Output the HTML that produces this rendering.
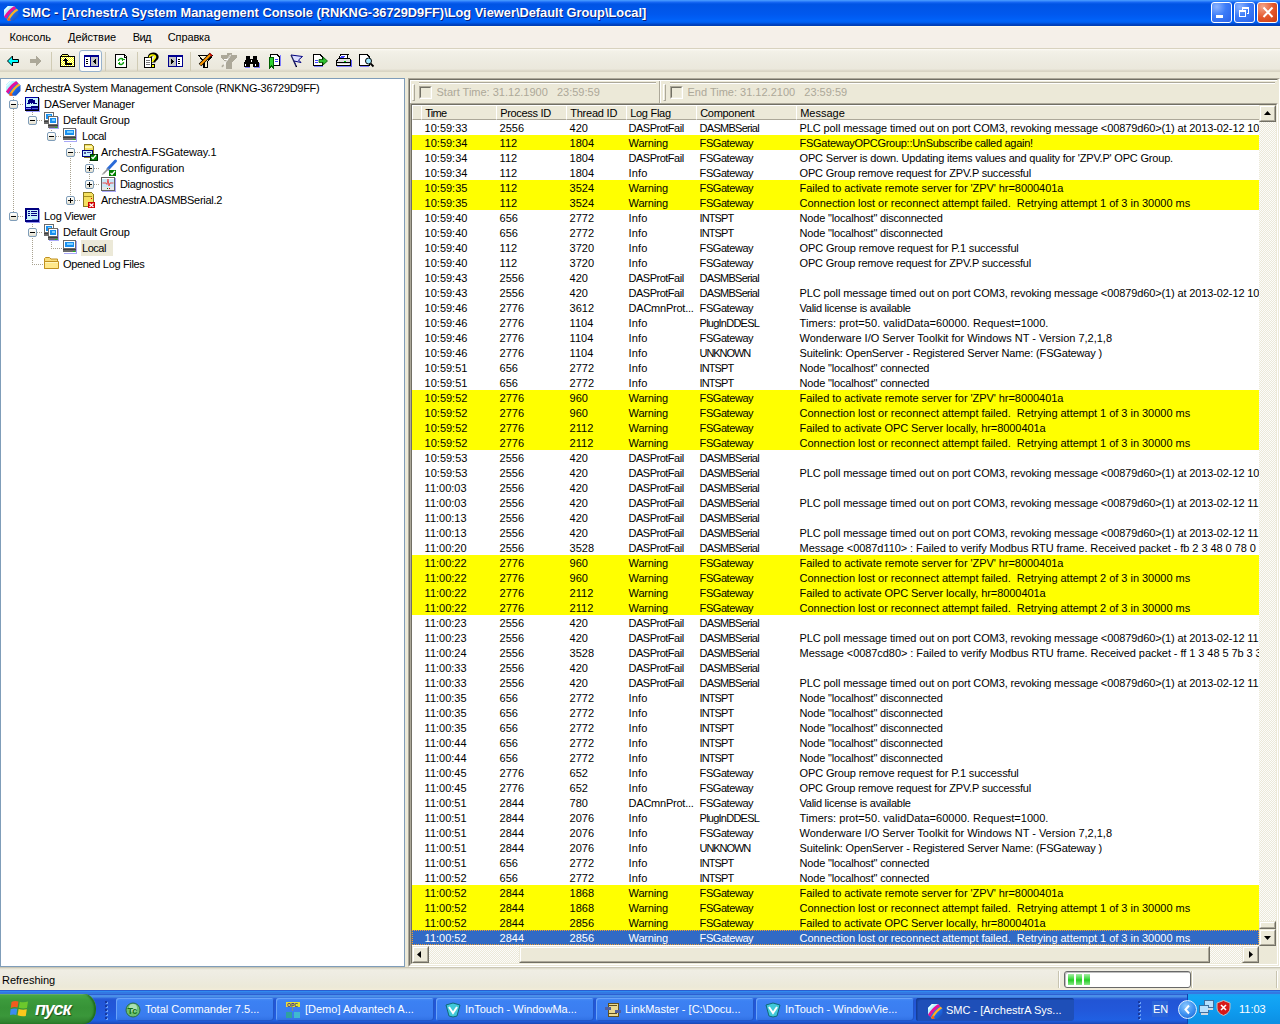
<!DOCTYPE html><html><head><meta charset="utf-8"><title>SMC</title><style>
*{margin:0;padding:0;box-sizing:border-box}
html,body{width:1280px;height:1024px;overflow:hidden;background:#ece9d8;font-family:"Liberation Sans",sans-serif;font-size:11px;color:#000}
.a{position:absolute}
.t{position:absolute;white-space:pre;line-height:13px}
svg{position:absolute;overflow:visible}
#title{left:0;top:0;width:1280px;height:26px;background:linear-gradient(#4a9cff 0,#3a8cfc 1px,#1a6af6 2px,#0054e4 4px,#0055e8 8px,#0058ee 14px,#005ef5 18px,#0064fa 21px,#005ae8 23px,#0046c8 24px,#003cb0 26px)}
#ttext{left:21.5px;top:5px;font-weight:bold;font-size:13.7px;color:#fff;text-shadow:1px 1px 0 #0a1e7a;line-height:16px;transform-origin:0 0;transform:scaleX(0.937)}
.tb{top:2px;width:21px;height:21px;border:1px solid #fff;border-radius:3px}
#menubar{left:0;top:26px;width:1280px;height:22px;background:linear-gradient(#fffbea 0,#fffbea 1px,#f5f0e9 1px)}
#tool{left:0;top:49px;width:1280px;height:23px;background:linear-gradient(#fdfcf7 0,#f3f1e8 2px,#eeece2 10px,#ebe8dc 20px,#d9d5c4 22px)}
.sep{width:1px;height:18px;background:#c9c4ae;top:52px}
#tree{left:0;top:78px;width:405px;height:889px;background:#fff;border:1px solid #7f9db9}
#pane{left:408px;top:78px;width:872px;height:889px;border-top:1px solid #aca899;border-left:1px solid #aca899;border-right:1px solid #fff;border-bottom:1px solid #fff}
#pane2{left:409px;top:79px;width:869px;height:887px;border-top:1px solid #716f64;border-left:1px solid #716f64;border-right:1px solid #ece9d8;border-bottom:1px solid #ece9d8}
#lv{left:410px;top:103px;width:868px;height:862px;border-top:1px solid #aca899;border-left:1px solid #aca899;border-right:1px solid #fff;border-bottom:1px solid #fff;background:#fff}
#lv2{left:411px;top:104px;width:866px;height:860px;border-top:1px solid #716f64;border-left:1px solid #716f64;border-right:1px solid #ece9d8;border-bottom:1px solid #ece9d8}
.hd{position:absolute;top:105px;height:15px;background:#ece9d8;border-top:1px solid #fff;border-left:1px solid #fff;border-right:1px solid #aca899;border-bottom:1px solid #aca899}
.hd span{position:absolute;left:3px;top:1px;white-space:pre;line-height:13px}
.row{position:absolute;left:412px;width:847px;height:15px;overflow:hidden}
.row span{position:absolute;top:2px;white-space:pre;line-height:13px}
.Y{background:#ffff00}
.S{background:#316ac5;color:#fff}
.btn{position:absolute;background:#ece9d8;border-top:1px solid #ece9d8;border-left:1px solid #ece9d8;border-right:1px solid #716f64;border-bottom:1px solid #716f64}
.btn>i{position:absolute;left:0;top:0;right:0;bottom:0;border-top:1px solid #fff;border-left:1px solid #fff;border-right:1px solid #aca899;border-bottom:1px solid #aca899}
.trk{position:absolute;background-color:#f5f4ee;background-image:repeating-conic-gradient(#fcfcfb 0 25%,#ece9d8 0 50%);background-size:2px 2px}
.cb{position:absolute;width:13px;height:13px;border-top:1px solid #aca899;border-left:1px solid #aca899;border-right:1px solid #fff;border-bottom:1px solid #fff}
.cb>i{position:absolute;left:0;top:0;right:0;bottom:0;border-top:1px solid #716f64;border-left:1px solid #716f64;border-right:1px solid #f1efe2;border-bottom:1px solid #f1efe2;background:#ece9d8}
.gr{color:#aca899}
.tt{position:absolute;white-space:pre;line-height:13px}
#status{left:0;top:967px;width:1280px;height:23px;background:linear-gradient(#b8b4a2 0,#dcd9c8 1px,#f0eee4 3px,#eeece2 8px,#ece9d8 20px,#f2ecd8 23px)}
#taskbar{left:0;top:990px;width:1280px;height:34px;background:linear-gradient(#2a5ed0 0,#2a5ed0 1px,#3089ef 1px,#3089ef 2px,#3477e2 2px,#3477e2 4px,#2c5fd2 4px,#2c5fd2 5px,#4a8fe8 5px,#4a8fe8 7px,#3068dc 8px,#2255d5 10px,#2258da 20px,#2060e3 30px,#1f56d2 32px,#1a46b0 34px)}
.task{position:absolute;top:998px;width:158px;height:23px;border-radius:3px;background:linear-gradient(#4c8ef5 0,#3c81f3 3px,#3a7cef 18px,#2f6fe2 23px);box-shadow:inset -1px -1px 0 #2256c8, inset 1px 1px 0 #6aa3f8}
.task.act{background:#1e4fb8;box-shadow:inset 1px 1px 0 #153e98, inset 2px 2px 0 #1a47a8}
.task span{position:absolute;left:29px;top:5px;color:#fff;white-space:pre;line-height:13px}
#tray{left:1187px;top:994px;width:93px;height:30px;background:linear-gradient(#1ea0f0 0,#13a6f5 3px,#0f9df0 15px,#0c8fe3 30px);border-left:1px solid #1042af}
</style></head><body>
<div id="title" class="a"></div>
<svg style="left:3px;top:5px" width="16" height="16" viewBox="0 0 16 16" shape-rendering="crispEdges"><defs><clipPath id="ac1"><path d="M5 1 H11 L15.5 5.5 V11 L11 15.8 H5 L1 11.5 V5Z"/></clipPath><linearGradient id="ag1" x1="0" y1="0" x2="1" y2="1"><stop offset="0" stop-color="#40a8ff"/><stop offset="0.6" stop-color="#1a6ae8"/><stop offset="1" stop-color="#2040a0"/></linearGradient></defs><g clip-path="url(#ac1)" shape-rendering="auto"><rect x="0" y="0" width="17" height="17" fill="url(#ag1)"/><path d="M0 0 H13 L1 13Z" fill="#b8f4ff"/><path d="M0 8 L8 0 H3 L0 3Z" fill="#e8ffff"/><path d="M1 14.5 C4 9 8 4 13.5 1.5" stroke="#e8109a" stroke-width="3" fill="none"/><path d="M4.5 16 C7 11 10.5 6.5 16 3.5" stroke="#ffb020" stroke-width="2.2" fill="none"/><path d="M0 12 L4 16 H0Z" fill="#a00060"/><path d="M3.5 16 L6 12 L8 16Z" fill="#ff6010"/></g></svg>
<div id="ttext" class="t">SMC - [ArchestrA System Management Console (RNKNG-36729D9FF)\Log Viewer\Default Group\Local]</div>
<div class="a tb" style="left:1211px;background:radial-gradient(circle at 25% 20%,#8cb4ff 0,#3c7cf8 45%,#2a62e8 100%)"><div class="a" style="left:4px;top:12px;width:7px;height:3px;background:#fff"></div></div>
<div class="a tb" style="left:1234px;background:radial-gradient(circle at 25% 20%,#8cb4ff 0,#3c7cf8 45%,#2a62e8 100%)"><svg style="left:3px;top:3px" width="14" height="14" shape-rendering="crispEdges"><path d="M4 1 H11 V8 H9 V7 H10 V3 H5 V4 H4Z" fill="#fff"/><path d="M1 4 H8 V11 H1Z M2 6 V10 H7 V6Z" fill="#fff" fill-rule="evenodd"/></svg></div>
<div class="a tb" style="left:1257px;background:radial-gradient(circle at 25% 20%,#f3a58a 0,#e4582c 50%,#c83c12 100%)"><svg style="left:4px;top:4px" width="12" height="12"><path d="M1.5 0.5 L10.5 10 M10.5 0.5 L1.5 10" stroke="#fff" stroke-width="2"/></svg></div>
<div id="menubar" class="a"></div>
<div class="a" style="left:0;top:48px;width:1280px;height:1px;background:#d8d2bf"></div>
<div class="t" style="left:9.5px;top:31px;letter-spacing:-0.121px">Консоль</div>
<div class="t" style="left:68px;top:31px;letter-spacing:-0.032px">Действие</div>
<div class="t" style="left:132.8px;top:31px;letter-spacing:-0.602px">Вид</div>
<div class="t" style="left:167.8px;top:31px;letter-spacing:-0.137px">Справка</div>
<div id="tool" class="a"></div>
<div class="a" style="left:51px;top:52px;width:1px;height:19px;background:#d0cbb4"></div>
<div class="a" style="left:105px;top:52px;width:1px;height:19px;background:#d0cbb4"></div>
<div class="a" style="left:137px;top:52px;width:1px;height:19px;background:#d0cbb4"></div>
<div class="a" style="left:190px;top:52px;width:1px;height:19px;background:#d0cbb4"></div>
<svg style="left:6px;top:55px" width="14" height="13" viewBox="0 0 14 13" shape-rendering="crispEdges"><path d="M1.5 6 L6.5 1 V4.5 H12.5 V7.5 H6.5 V11Z" fill="#00ffff" stroke="#000" stroke-width="1" shape-rendering="auto" stroke-linejoin="miter"/></svg>
<svg style="left:29px;top:55px" width="14" height="13" viewBox="0 0 14 13" shape-rendering="crispEdges"><path d="M1 4 H7 V0.5 L12.5 6 L7 11.5 V8 H1Z" fill="#aca899"/></svg>
<svg style="left:60px;top:54px" width="16" height="14" viewBox="0 0 16 14" shape-rendering="crispEdges"><defs><pattern id="chk" width="2" height="2" patternUnits="userSpaceOnUse"><rect width="2" height="2" fill="#ffff00"/><rect width="1" height="1" fill="#fffff0"/><rect x="1" y="1" width="1" height="1" fill="#fffff0"/></pattern></defs><rect x="1" y="3" width="14" height="10" fill="url(#chk)"/><rect x="2" y="0" width="6" height="1" fill="#000"/><rect x="1" y="1" width="1" height="2" fill="#000"/><rect x="8" y="1" width="1" height="2" fill="#000"/><rect x="2" y="1" width="6" height="2" fill="#ffff60"/><rect x="0" y="2" width="15" height="1" fill="#000"/><rect x="0" y="2" width="1" height="11" fill="#000"/><rect x="14" y="2" width="1" height="11" fill="#000"/><rect x="0" y="12" width="15" height="1" fill="#000"/><rect x="5" y="4" width="1" height="1" fill="#000"/><rect x="4" y="5" width="3" height="1" fill="#000"/><rect x="3" y="6" width="5" height="1" fill="#000"/><rect x="5" y="7" width="2" height="3" fill="#000"/><rect x="5" y="9" width="7" height="2" fill="#000"/></svg>
<div class="a" style="left:79px;top:50px;width:23px;height:22px;border:1px solid #98b2cc;border-radius:3px;background:#fcfcfa"></div>
<svg style="left:84px;top:55px" width="15" height="12" viewBox="0 0 15 12" shape-rendering="crispEdges"><rect x="0" y="0" width="15" height="12" fill="#000090"/><rect x="1" y="2" width="5" height="9" fill="#fff"/><rect x="7" y="2" width="7" height="9" fill="#c4c4c4"/><rect x="2" y="4" width="2" height="1" fill="#000"/><rect x="2" y="6" width="2" height="1" fill="#000"/><rect x="2" y="8" width="2" height="1" fill="#000"/><path d="M12 3.5 V9.5 L9 6.5Z" fill="#000"/></svg>
<svg style="left:115px;top:54px" width="13" height="15" viewBox="0 0 13 15" shape-rendering="crispEdges"><path d="M0.5 0.5 H9 L11.5 3 V13.5 H0.5Z" fill="#fff" stroke="#000"/><path d="M9 0.5 V3 H11.5" fill="#fff" stroke="#000"/><path d="M3.5 7 A2.5 2.5 0 0 1 8 5.5 M8.5 8 A2.5 2.5 0 0 1 4 9.5" stroke="#10a010" stroke-width="1.4" fill="none" shape-rendering="auto"/><path d="M7 3.5 L9.5 5.5 L7 7Z M5 7.5 L2.5 9.5 L5 11.5Z" fill="#10a010"/></svg>
<svg style="left:144px;top:53px" width="16" height="16" viewBox="0 0 16 16" shape-rendering="crispEdges"><path d="M0.5 4.5 H7 V14.5 H0.5Z" fill="#fff" stroke="#000"/><rect x="2" y="7" width="4" height="1" fill="#777"/><rect x="2" y="9" width="4" height="1" fill="#777"/><rect x="2" y="11" width="4" height="1" fill="#777"/><path d="M5.5 4.5 C5.5 0.5 13 0 13 4 C13 6.5 9.5 6.5 9.5 9.5" stroke="#000" stroke-width="3.4" fill="none" shape-rendering="auto"/><path d="M5.5 4.5 C5.5 1.5 11.5 1 11.5 4 C11.5 6 8.5 6.5 8.5 9" stroke="#ffff00" stroke-width="1.6" fill="none" shape-rendering="auto"/><rect x="6.5" y="11" width="4" height="3.5" fill="#000"/><rect x="7.5" y="12" width="2.5" height="1.8" fill="#ffff00"/></svg>
<svg style="left:168px;top:55px" width="15" height="12" viewBox="0 0 15 12" shape-rendering="crispEdges"><rect x="0" y="0" width="15" height="12" fill="#000090"/><rect x="1" y="2" width="7" height="9" fill="#c4c4c4"/><rect x="9" y="2" width="5" height="9" fill="#fff"/><rect x="10" y="4" width="2" height="1" fill="#000"/><rect x="10" y="6" width="2" height="1" fill="#000"/><rect x="10" y="8" width="2" height="1" fill="#000"/><path d="M3 3.5 V9.5 L6 6.5Z" fill="#000"/></svg>
<svg style="left:198px;top:53px" width="16" height="16" viewBox="0 0 16 16" shape-rendering="crispEdges"><path d="M0.5 2.5 H14.5 L9.5 8.5 V14.5 H6 V8.5Z" fill="#fff4d0" stroke="#000" stroke-width="1.2"/><path d="M2 12 L13 1" stroke="#000" stroke-width="3.6" shape-rendering="auto"/><path d="M2.3 11.7 L12.7 1.3" stroke="#ff9900" stroke-width="2" shape-rendering="auto"/><path d="M11.5 0.5 L14 3" stroke="#cc0000" stroke-width="1.5" shape-rendering="auto"/></svg>
<svg style="left:221px;top:53px" width="17" height="17" viewBox="0 0 17 17" shape-rendering="crispEdges"><path d="M6 0 H11 V2 H16 V4 L11 9.5 V16 H5 V9.5 L0 4 V2 H6Z" fill="#aca899"/><path d="M1.5 13.5 L10 1.5" stroke="#fff" stroke-width="1.2" stroke-dasharray="1.2 0.6" shape-rendering="auto"/><path d="M0.5 13 L2.5 11 L3 13 L1 14.5Z" fill="#aca899" shape-rendering="auto"/><rect x="3" y="6" width="4" height="1" fill="#fff"/></svg>
<svg style="left:244px;top:55px" width="16" height="14" viewBox="0 0 16 14" shape-rendering="crispEdges"><path d="M2 1 H6 V4 H9 V1 H13 V4 L15 8 V12 H9 V9 H6 V12 H0 V8 L2 4Z" fill="#000"/><rect x="1" y="9" width="1" height="2" fill="#fff"/><rect x="11" y="9" width="1" height="2" fill="#fff"/><rect x="7" y="5" width="1" height="2" fill="#fff"/><rect x="15" y="8" width="1" height="5" fill="#8080ff"/><rect x="1" y="12" width="5" height="1" fill="#8080ff"/><rect x="10" y="12" width="6" height="1" fill="#8080ff"/></svg>
<svg style="left:269px;top:54px" width="13" height="15" viewBox="0 0 13 15" shape-rendering="crispEdges"><path d="M1.5 0.5 H8 L10.5 3 V11.5 H1.5Z" fill="#fff" stroke="#000"/><rect x="6" y="5" width="3" height="1" fill="#4040ff"/><rect x="6" y="7" width="3" height="1" fill="#4040ff"/><path d="M0.5 3.5 H4.5 V14 L2.5 12 L0.5 14Z" fill="#30d030" stroke="#006000"/><rect x="11" y="1" width="1" height="11" fill="#8080ff"/></svg>
<svg style="left:290px;top:54px" width="14" height="14" viewBox="0 0 14 14" shape-rendering="crispEdges"><path d="M1 1 L12.5 2.5 L8.5 6 L11 8.5 L4 7 L6.5 13" stroke="#000080" stroke-width="1" fill="#dde0ff" shape-rendering="auto"/><path d="M1 1 L6.5 13" stroke="#202060" stroke-width="1.3" shape-rendering="auto"/><circle cx="6.5" cy="12.5" r="1" fill="#000"/></svg>
<svg style="left:313px;top:54px" width="16" height="14" viewBox="0 0 16 14" shape-rendering="crispEdges"><path d="M0.5 0.5 H7 L9.5 3 V11.5 H0.5Z" fill="#fff" stroke="#000"/><rect x="2" y="6" width="3" height="1" fill="#4040ff"/><rect x="2" y="8" width="3" height="1" fill="#4040ff"/><path d="M6 5.5 H10 V3 L14.5 7 L10 11 V8.5 H6Z" fill="#30c030" stroke="#005000" stroke-width="0.8" shape-rendering="auto"/><rect x="1" y="12" width="9" height="1" fill="#8080ff"/></svg>
<svg style="left:336px;top:54px" width="16" height="14" viewBox="0 0 16 14" shape-rendering="crispEdges"><path d="M4.5 0.5 H12 L11 4.5 H3Z" fill="#fff" stroke="#000"/><rect x="5" y="1.5" width="4" height="1" fill="#4040ff"/><rect x="4" y="3" width="4" height="1" fill="#4040ff"/><path d="M2.5 4.5 H13.5 L14.5 6 V11.5 H0.5 V7Z" fill="#ddd" stroke="#000"/><rect x="1" y="8" width="13" height="1" fill="#000"/><rect x="8" y="7" width="2" height="1" fill="#00c000"/><rect x="2" y="10" width="11" height="1" fill="#fff"/><rect x="15" y="6" width="1" height="7" fill="#6060ff"/><rect x="1" y="12" width="14" height="1" fill="#8080ff"/></svg>
<svg style="left:359px;top:54px" width="16" height="14" viewBox="0 0 16 14" shape-rendering="crispEdges"><path d="M0.5 0.5 H8 L10.5 3 V11.5 H0.5Z" fill="#fff" stroke="#000"/><circle cx="9.5" cy="7" r="3" fill="#a0e8ff" stroke="#000" stroke-width="1" shape-rendering="auto"/><path d="M11.5 9.5 L14.5 12.5" stroke="#000" stroke-width="1.8" shape-rendering="auto"/><rect x="1" y="12" width="9" height="1" fill="#8080ff"/></svg>
<div id="tree" class="a"></div>
<div class="a" style="left:13px;top:97px;width:1px;height:119px;background:repeating-linear-gradient(#a8a290 0 1px,transparent 1px 2px)"></div>
<div class="a" style="left:32px;top:112px;width:1px;height:8px;background:repeating-linear-gradient(#a8a290 0 1px,transparent 1px 2px)"></div>
<div class="a" style="left:51px;top:128px;width:1px;height:8px;background:repeating-linear-gradient(#a8a290 0 1px,transparent 1px 2px)"></div>
<div class="a" style="left:70px;top:144px;width:1px;height:56px;background:repeating-linear-gradient(#a8a290 0 1px,transparent 1px 2px)"></div>
<div class="a" style="left:89px;top:160px;width:1px;height:24px;background:repeating-linear-gradient(#a8a290 0 1px,transparent 1px 2px)"></div>
<div class="a" style="left:32px;top:224px;width:1px;height:40px;background:repeating-linear-gradient(#a8a290 0 1px,transparent 1px 2px)"></div>
<div class="a" style="left:51px;top:240px;width:1px;height:8px;background:repeating-linear-gradient(#a8a290 0 1px,transparent 1px 2px)"></div>
<svg style="left:5px;top:80px" width="16" height="16" viewBox="0 0 16 16" shape-rendering="crispEdges"><defs><clipPath id="ac2"><path d="M5 1 H11 L15.5 5.5 V11 L11 15.8 H5 L1 11.5 V5Z"/></clipPath><linearGradient id="ag2" x1="0" y1="0" x2="1" y2="1"><stop offset="0" stop-color="#40a8ff"/><stop offset="0.6" stop-color="#1a6ae8"/><stop offset="1" stop-color="#2040a0"/></linearGradient></defs><g clip-path="url(#ac2)" shape-rendering="auto"><rect x="0" y="0" width="17" height="17" fill="url(#ag2)"/><path d="M0 0 H13 L1 13Z" fill="#b8f4ff"/><path d="M0 8 L8 0 H3 L0 3Z" fill="#e8ffff"/><path d="M1 14.5 C4 9 8 4 13.5 1.5" stroke="#e8109a" stroke-width="3" fill="none"/><path d="M4.5 16 C7 11 10.5 6.5 16 3.5" stroke="#ffb020" stroke-width="2.2" fill="none"/><path d="M0 12 L4 16 H0Z" fill="#a00060"/><path d="M3.5 16 L6 12 L8 16Z" fill="#ff6010"/></g></svg>
<div class="t" style="left:25px;top:82px;letter-spacing:-0.293px">ArchestrA System Management Console (RNKNG-36729D9FF)</div>
<div class="a" style="left:18px;top:104px;width:6px;height:1px;background:repeating-linear-gradient(90deg,#a8a290 0 1px,transparent 1px 2px)"></div>
<div class="a" style="left:9px;top:100px;width:9px;height:9px;border:1px solid #7f9db9;border-radius:2px;background:linear-gradient(#fff 0,#f6f4ec 3px,#ddd9c8 8px)"></div>
<div class="a" style="left:11px;top:104px;width:5px;height:1px;background:#000"></div>
<svg style="left:25px;top:96px" width="16" height="16" viewBox="0 0 16 16" shape-rendering="crispEdges"><rect x="0" y="1" width="14" height="14" fill="#000"/><rect x="0" y="1" width="13" height="13" fill="#0000a0"/><rect x="1" y="2" width="12" height="9" fill="#c8f4ff"/><rect x="4" y="3" width="4" height="1" fill="#000080"/><rect x="3" y="4" width="7" height="3" fill="#000080"/><rect x="2" y="7" width="3" height="1" fill="#000080"/><rect x="8" y="7" width="4" height="1" fill="#000080"/><rect x="6" y="6" width="1" height="2" fill="#000080"/><rect x="1" y="11" width="12" height="3" fill="#000080"/><rect x="1" y="12" width="5" height="1" fill="#8080ff"/><rect x="7" y="12" width="6" height="1" fill="#4a60d0"/><rect x="1" y="9" width="5" height="2" fill="#c8f4ff"/><rect x="6" y="10" width="7" height="1" fill="#000080"/><rect x="14" y="2" width="1" height="14" fill="#9898ff"/><rect x="1" y="15" width="14" height="1" fill="#9898ff"/></svg>
<div class="t" style="left:44px;top:98px;letter-spacing:-0.222px">DAServer Manager</div>
<div class="a" style="left:37px;top:120px;width:6px;height:1px;background:repeating-linear-gradient(90deg,#a8a290 0 1px,transparent 1px 2px)"></div>
<div class="a" style="left:28px;top:116px;width:9px;height:9px;border:1px solid #7f9db9;border-radius:2px;background:linear-gradient(#fff 0,#f6f4ec 3px,#ddd9c8 8px)"></div>
<div class="a" style="left:30px;top:120px;width:5px;height:1px;background:#000"></div>
<svg style="left:44px;top:112px" width="16" height="16" viewBox="0 0 16 16" shape-rendering="crispEdges"><rect x="0.5" y="0.5" width="9" height="8" fill="#fff" stroke="#6a6a6a" stroke-width="1"/><rect x="2.0" y="2.0" width="6" height="5" fill="#1a90f0"/><rect x="3.5" y="3.0" width="3" height="2" fill="#7ccfff"/><rect x="0.0" y="9.0" width="10" height="1" fill="#404040"/><rect x="0.5" y="10.0" width="9" height="1.5" fill="#fff" stroke="#6a6a6a" stroke-width="1"/><rect x="6.5" y="10.5" width="2" height="1" fill="#18c018"/><rect x="4.5" y="4.5" width="9" height="8" fill="#fff" stroke="#6a6a6a" stroke-width="1"/><rect x="6.0" y="6.0" width="6" height="5" fill="#1a90f0"/><rect x="7.5" y="7.0" width="3" height="2" fill="#7ccfff"/><rect x="4.0" y="13.0" width="10" height="1" fill="#404040"/><rect x="4.5" y="14.0" width="9" height="1.5" fill="#fff" stroke="#6a6a6a" stroke-width="1"/><rect x="10.5" y="14.5" width="2" height="1" fill="#18c018"/><rect x="14" y="5" width="1" height="11" fill="#a8a8f8"/><rect x="5" y="16" width="10" height="1" fill="#a8a8f8"/></svg>
<div class="t" style="left:63px;top:114px;letter-spacing:-0.137px">Default Group</div>
<div class="a" style="left:56px;top:136px;width:6px;height:1px;background:repeating-linear-gradient(90deg,#a8a290 0 1px,transparent 1px 2px)"></div>
<div class="a" style="left:47px;top:132px;width:9px;height:9px;border:1px solid #7f9db9;border-radius:2px;background:linear-gradient(#fff 0,#f6f4ec 3px,#ddd9c8 8px)"></div>
<div class="a" style="left:49px;top:136px;width:5px;height:1px;background:#000"></div>
<svg style="left:63px;top:128px" width="16" height="16" viewBox="0 0 16 16" shape-rendering="crispEdges"><rect x="0.5" y="0.5" width="12" height="8" fill="#fff" stroke="#6a6a6a" stroke-width="1"/><rect x="2.0" y="2.0" width="9" height="5" fill="#1a90f0"/><rect x="3.5" y="3.0" width="6" height="2" fill="#7ccfff"/><rect x="0.0" y="9.0" width="13" height="1" fill="#404040"/><rect x="0.5" y="10.0" width="12" height="1.5" fill="#fff" stroke="#6a6a6a" stroke-width="1"/><rect x="9.5" y="10.5" width="2" height="1" fill="#18c018"/><rect x="13" y="1" width="1" height="12" fill="#a8a8f8"/><rect x="1" y="12.5" width="13" height="1" fill="#a8a8f8"/></svg>
<div class="t" style="left:82px;top:130px;letter-spacing:-0.459px">Local</div>
<div class="a" style="left:75px;top:152px;width:6px;height:1px;background:repeating-linear-gradient(90deg,#a8a290 0 1px,transparent 1px 2px)"></div>
<div class="a" style="left:66px;top:148px;width:9px;height:9px;border:1px solid #7f9db9;border-radius:2px;background:linear-gradient(#fff 0,#f6f4ec 3px,#ddd9c8 8px)"></div>
<div class="a" style="left:68px;top:152px;width:5px;height:1px;background:#000"></div>
<svg style="left:82px;top:144px" width="16" height="16" viewBox="0 0 16 16" shape-rendering="crispEdges"><path d="M2.5 0.5 H9.5 L11.5 2.5 V13.5 H2.5Z" fill="#f4e060" stroke="#8a7a20"/><rect x="3" y="2" width="7" height="2" fill="#fff8b0"/><rect x="0.5" y="6.5" width="10" height="6" fill="#c8f0ff" stroke="#000080"/><rect x="2" y="8" width="2" height="2" fill="#5050a0"/><rect x="5" y="8" width="4" height="1" fill="#5050a0"/><rect x="8" y="10" width="7" height="6" fill="#008000" stroke="#003000"/><path d="M9.5 13 L11 14.5 L14 11" stroke="#fff" stroke-width="1.3" fill="none" shape-rendering="auto"/></svg>
<div class="t" style="left:101px;top:146px;letter-spacing:-0.08px">ArchestrA.FSGateway.1</div>
<div class="a" style="left:94px;top:168px;width:6px;height:1px;background:repeating-linear-gradient(90deg,#a8a290 0 1px,transparent 1px 2px)"></div>
<div class="a" style="left:85px;top:164px;width:9px;height:9px;border:1px solid #7f9db9;border-radius:2px;background:linear-gradient(#fff 0,#f6f4ec 3px,#ddd9c8 8px)"></div>
<div class="a" style="left:87px;top:168px;width:5px;height:1px;background:#000"></div>
<div class="a" style="left:89px;top:166px;width:1px;height:5px;background:#000"></div>
<svg style="left:101px;top:160px" width="16" height="16" viewBox="0 0 16 16" shape-rendering="crispEdges"><path d="M14.5 1 L7 9" stroke="#2a6ad8" stroke-width="3" stroke-linecap="round" shape-rendering="auto"/><path d="M7.5 8.5 L2 14" stroke="#909090" stroke-width="1.6" shape-rendering="auto"/><path d="M1 15 L2.5 13" stroke="#c0c0c0" stroke-width="1" shape-rendering="auto"/><rect x="8" y="10" width="7" height="6" fill="#008000"/><path d="M9.5 13 L11 14.5 L14 11" stroke="#fff" stroke-width="1.3" fill="none" shape-rendering="auto"/></svg>
<div class="t" style="left:120px;top:162px;letter-spacing:-0.088px">Configuration</div>
<div class="a" style="left:94px;top:184px;width:6px;height:1px;background:repeating-linear-gradient(90deg,#a8a290 0 1px,transparent 1px 2px)"></div>
<div class="a" style="left:85px;top:180px;width:9px;height:9px;border:1px solid #7f9db9;border-radius:2px;background:linear-gradient(#fff 0,#f6f4ec 3px,#ddd9c8 8px)"></div>
<div class="a" style="left:87px;top:184px;width:5px;height:1px;background:#000"></div>
<div class="a" style="left:89px;top:182px;width:1px;height:5px;background:#000"></div>
<svg style="left:101px;top:176px" width="16" height="16" viewBox="0 0 16 16" shape-rendering="crispEdges"><g transform="translate(0,1)"><rect x="0.5" y="0.5" width="13" height="13" fill="#c8e8f8" stroke="#606060"/><rect x="1" y="1" width="12" height="1" fill="#fff"/><rect x="1" y="10" width="12" height="3" fill="#e8e8e8"/><path d="M1.5 6 H5 L6 7.5 L7 2 L8 9 L9 6 H12.5" stroke="#e85050" stroke-width="1" fill="none" shape-rendering="auto"/><rect x="6" y="11" width="1" height="1" fill="#008000"/><rect x="8" y="11" width="1" height="1" fill="#c00000"/><rect x="14" y="1" width="1" height="14" fill="#a8a8f8"/><rect x="1" y="14" width="14" height="1" fill="#a8a8f8"/></g></svg>
<div class="t" style="left:120px;top:178px;letter-spacing:-0.324px">Diagnostics</div>
<div class="a" style="left:75px;top:200px;width:6px;height:1px;background:repeating-linear-gradient(90deg,#a8a290 0 1px,transparent 1px 2px)"></div>
<div class="a" style="left:66px;top:196px;width:9px;height:9px;border:1px solid #7f9db9;border-radius:2px;background:linear-gradient(#fff 0,#f6f4ec 3px,#ddd9c8 8px)"></div>
<div class="a" style="left:68px;top:200px;width:5px;height:1px;background:#000"></div>
<div class="a" style="left:70px;top:198px;width:1px;height:5px;background:#000"></div>
<svg style="left:82px;top:192px" width="16" height="16" viewBox="0 0 16 16" shape-rendering="crispEdges"><path d="M1.5 0.5 H9.5 L11.5 2.5 V14.5 H1.5Z" fill="#f4e060" stroke="#8a7a20"/><rect x="2" y="4" width="8" height="1" fill="#a89020"/><rect x="9" y="6" width="1" height="1" fill="#e00000"/><rect x="6" y="10" width="7" height="6" fill="#d00000"/><path d="M7.5 11.5 L11.5 15 M11.5 11.5 L7.5 15" stroke="#fff" stroke-width="1.3" shape-rendering="auto"/></svg>
<div class="t" style="left:101px;top:194px;letter-spacing:-0.294px">ArchestrA.DASMBSerial.2</div>
<div class="a" style="left:18px;top:216px;width:6px;height:1px;background:repeating-linear-gradient(90deg,#a8a290 0 1px,transparent 1px 2px)"></div>
<div class="a" style="left:9px;top:212px;width:9px;height:9px;border:1px solid #7f9db9;border-radius:2px;background:linear-gradient(#fff 0,#f6f4ec 3px,#ddd9c8 8px)"></div>
<div class="a" style="left:11px;top:216px;width:5px;height:1px;background:#000"></div>
<svg style="left:25px;top:208px" width="16" height="16" viewBox="0 0 16 16" shape-rendering="crispEdges"><rect x="0" y="0" width="14" height="14" fill="#000080"/><rect x="1.5" y="1.5" width="11" height="9" fill="#c6f0fb"/><rect x="3" y="3" width="2" height="1" fill="#000080"/><rect x="3" y="5" width="2" height="1" fill="#000080"/><rect x="3" y="7" width="2" height="1" fill="#000080"/><rect x="6" y="3" width="6" height="1" fill="#000080"/><rect x="6" y="5" width="6" height="1" fill="#000080"/><rect x="6" y="7" width="6" height="1" fill="#000080"/><rect x="1" y="11" width="6" height="1" fill="#c6f0fb"/><rect x="7" y="11" width="6" height="1" fill="#5a8ce0"/><rect x="14" y="1" width="1" height="14" fill="#9090f0"/><rect x="1" y="14" width="14" height="1" fill="#9090f0"/></svg>
<div class="t" style="left:44px;top:210px;letter-spacing:-0.284px">Log Viewer</div>
<div class="a" style="left:37px;top:232px;width:6px;height:1px;background:repeating-linear-gradient(90deg,#a8a290 0 1px,transparent 1px 2px)"></div>
<div class="a" style="left:28px;top:228px;width:9px;height:9px;border:1px solid #7f9db9;border-radius:2px;background:linear-gradient(#fff 0,#f6f4ec 3px,#ddd9c8 8px)"></div>
<div class="a" style="left:30px;top:232px;width:5px;height:1px;background:#000"></div>
<svg style="left:44px;top:224px" width="16" height="16" viewBox="0 0 16 16" shape-rendering="crispEdges"><rect x="0.5" y="0.5" width="9" height="8" fill="#fff" stroke="#6a6a6a" stroke-width="1"/><rect x="2.0" y="2.0" width="6" height="5" fill="#1a90f0"/><rect x="3.5" y="3.0" width="3" height="2" fill="#7ccfff"/><rect x="0.0" y="9.0" width="10" height="1" fill="#404040"/><rect x="0.5" y="10.0" width="9" height="1.5" fill="#fff" stroke="#6a6a6a" stroke-width="1"/><rect x="6.5" y="10.5" width="2" height="1" fill="#18c018"/><rect x="4.5" y="4.5" width="9" height="8" fill="#fff" stroke="#6a6a6a" stroke-width="1"/><rect x="6.0" y="6.0" width="6" height="5" fill="#1a90f0"/><rect x="7.5" y="7.0" width="3" height="2" fill="#7ccfff"/><rect x="4.0" y="13.0" width="10" height="1" fill="#404040"/><rect x="4.5" y="14.0" width="9" height="1.5" fill="#fff" stroke="#6a6a6a" stroke-width="1"/><rect x="10.5" y="14.5" width="2" height="1" fill="#18c018"/><rect x="14" y="5" width="1" height="11" fill="#a8a8f8"/><rect x="5" y="16" width="10" height="1" fill="#a8a8f8"/></svg>
<div class="t" style="left:63px;top:226px;letter-spacing:-0.137px">Default Group</div>
<div class="a" style="left:51px;top:248px;width:11px;height:1px;background:repeating-linear-gradient(90deg,#a8a290 0 1px,transparent 1px 2px)"></div>
<svg style="left:63px;top:240px" width="16" height="16" viewBox="0 0 16 16" shape-rendering="crispEdges"><rect x="0.5" y="0.5" width="12" height="8" fill="#fff" stroke="#6a6a6a" stroke-width="1"/><rect x="2.0" y="2.0" width="9" height="5" fill="#1a90f0"/><rect x="3.5" y="3.0" width="6" height="2" fill="#7ccfff"/><rect x="0.0" y="9.0" width="13" height="1" fill="#404040"/><rect x="0.5" y="10.0" width="12" height="1.5" fill="#fff" stroke="#6a6a6a" stroke-width="1"/><rect x="9.5" y="10.5" width="2" height="1" fill="#18c018"/><rect x="13" y="1" width="1" height="12" fill="#a8a8f8"/><rect x="1" y="12.5" width="13" height="1" fill="#a8a8f8"/></svg>
<div class="a" style="left:81px;top:240px;width:32px;height:16px;background:#ece9d8"></div>
<div class="t" style="left:82px;top:242px;letter-spacing:-0.459px">Local</div>
<div class="a" style="left:32px;top:264px;width:11px;height:1px;background:repeating-linear-gradient(90deg,#a8a290 0 1px,transparent 1px 2px)"></div>
<svg style="left:44px;top:256px" width="16" height="16" viewBox="0 0 16 16" shape-rendering="crispEdges"><path d="M0.5 2.5 L1.5 1.5 H5.5 L7 3 H13.5 V12.5 H0.5Z" fill="#f8dc78" stroke="#c09020" shape-rendering="auto"/><path d="M0.5 5.5 H14.5 V12.5 H0.5Z" fill="#ffe88a" stroke="#c09020" shape-rendering="auto"/><rect x="1" y="6" width="13" height="1" fill="#fff6c0"/></svg>
<div class="t" style="left:63px;top:258px;letter-spacing:-0.334px">Opened Log Files</div>
<div id="pane" class="a"></div><div id="pane2" class="a"></div>
<div class="a" style="left:410px;top:80px;width:867px;height:1px;background:#fff"></div>
<div class="a" style="left:410px;top:80px;width:1px;height:23px;background:#fff"></div>
<div class="a" style="left:659px;top:81px;width:1px;height:22px;background:#aca899"></div>
<div class="a" style="left:660px;top:81px;width:1px;height:22px;background:#fff"></div>
<div class="a" style="left:412px;top:84px;width:3px;height:17px;border-left:1px solid #fff;border-top:1px solid #fff;border-right:1px solid #aca899;border-bottom:1px solid #aca899"></div>
<div class="a" style="left:419px;top:82px;width:237px;height:1px;background:#aca899"></div>
<div class="a" style="left:419px;top:83px;width:237px;height:1px;background:#fff"></div>
<div class="cb" style="left:419px;top:86px"><i></i></div>
<div class="a" style="left:663px;top:84px;width:3px;height:17px;border-left:1px solid #fff;border-top:1px solid #fff;border-right:1px solid #aca899;border-bottom:1px solid #aca899"></div>
<div class="a" style="left:670px;top:82px;width:605px;height:1px;background:#aca899"></div>
<div class="a" style="left:670px;top:83px;width:605px;height:1px;background:#fff"></div>
<div class="cb" style="left:670px;top:86px"><i></i></div>
<div class="t gr" style="left:436.5px;top:86px">Start Time: 31.12.1900   23:59:59</div>
<div class="t gr" style="left:687.5px;top:86px">End Time: 31.12.2100   23:59:59</div>
<div id="lv" class="a"></div><div id="lv2" class="a"></div>
<div class="hd" style="left:412px;width:10px"><span style="left:3.2px;letter-spacing:0px"></span></div>
<div class="hd" style="left:421px;width:76px"><span style="left:3.2px;letter-spacing:-0.712px">Time</span></div>
<div class="hd" style="left:496px;width:71px"><span style="left:3.2px;letter-spacing:-0.32px">Process ID</span></div>
<div class="hd" style="left:566px;width:61px"><span style="left:3.2px;letter-spacing:-0.214px">Thread ID</span></div>
<div class="hd" style="left:626px;width:71px"><span style="left:3.2px;letter-spacing:-0.277px">Log Flag</span></div>
<div class="hd" style="left:696px;width:101px"><span style="left:3.2px;letter-spacing:-0.297px">Component</span></div>
<div class="hd" style="left:796px;width:464px"><span style="left:3.2px;letter-spacing:0px">Message</span></div>
<div class="row" style="top:120px">
<span style="left:12.600000000000023px">10:59:33</span>
<span style="left:87.60000000000002px">2556</span>
<span style="left:157.60000000000002px">420</span>
<span style="left:216.60000000000002px;letter-spacing:-0.503px">DASProtFail</span>
<span style="left:287.6px;letter-spacing:-0.723px">DASMBSerial</span>
<span style="left:387.6px;letter-spacing:-0.119px">PLC poll message timed out on port COM3, revoking message &lt;00879d60&gt;(1) at 2013-02-12 10</span>
</div>
<div class="row Y" style="top:135px">
<span style="left:12.600000000000023px">10:59:34</span>
<span style="left:87.60000000000002px">112</span>
<span style="left:157.60000000000002px">1804</span>
<span style="left:216.60000000000002px;letter-spacing:-0.166px">Warning</span>
<span style="left:287.6px;letter-spacing:-0.43px">FSGateway</span>
<span style="left:387.6px;letter-spacing:-0.286px">FSGatewayOPCGroup::UnSubscribe called again!</span>
</div>
<div class="row" style="top:150px">
<span style="left:12.600000000000023px">10:59:34</span>
<span style="left:87.60000000000002px">112</span>
<span style="left:157.60000000000002px">1804</span>
<span style="left:216.60000000000002px;letter-spacing:-0.503px">DASProtFail</span>
<span style="left:287.6px;letter-spacing:-0.43px">FSGateway</span>
<span style="left:387.6px;letter-spacing:-0.189px">OPC Server is down. Updating items values and quality for 'ZPV.P' OPC Group.</span>
</div>
<div class="row" style="top:165px">
<span style="left:12.600000000000023px">10:59:34</span>
<span style="left:87.60000000000002px">112</span>
<span style="left:157.60000000000002px">1804</span>
<span style="left:216.60000000000002px;letter-spacing:0.16px">Info</span>
<span style="left:287.6px;letter-spacing:-0.43px">FSGateway</span>
<span style="left:387.6px;letter-spacing:-0.213px">OPC Group remove request for ZPV.P successful</span>
</div>
<div class="row Y" style="top:180px">
<span style="left:12.600000000000023px">10:59:35</span>
<span style="left:87.60000000000002px">112</span>
<span style="left:157.60000000000002px">3524</span>
<span style="left:216.60000000000002px;letter-spacing:-0.166px">Warning</span>
<span style="left:287.6px;letter-spacing:-0.43px">FSGateway</span>
<span style="left:387.6px;letter-spacing:-0.057px">Failed to activate remote server for 'ZPV' hr=8000401a</span>
</div>
<div class="row Y" style="top:195px">
<span style="left:12.600000000000023px">10:59:35</span>
<span style="left:87.60000000000002px">112</span>
<span style="left:157.60000000000002px">3524</span>
<span style="left:216.60000000000002px;letter-spacing:-0.166px">Warning</span>
<span style="left:287.6px;letter-spacing:-0.43px">FSGateway</span>
<span style="left:387.6px;letter-spacing:-0.025px">Connection lost or reconnect attempt failed.  Retrying attempt 1 of 3 in 30000 ms</span>
</div>
<div class="row" style="top:210px">
<span style="left:12.600000000000023px">10:59:40</span>
<span style="left:87.60000000000002px">656</span>
<span style="left:157.60000000000002px">2772</span>
<span style="left:216.60000000000002px;letter-spacing:0.16px">Info</span>
<span style="left:287.6px;letter-spacing:-0.904px">INTSPT</span>
<span style="left:387.6px;letter-spacing:-0.189px">Node "localhost" disconnected</span>
</div>
<div class="row" style="top:225px">
<span style="left:12.600000000000023px">10:59:40</span>
<span style="left:87.60000000000002px">656</span>
<span style="left:157.60000000000002px">2772</span>
<span style="left:216.60000000000002px;letter-spacing:0.16px">Info</span>
<span style="left:287.6px;letter-spacing:-0.904px">INTSPT</span>
<span style="left:387.6px;letter-spacing:-0.189px">Node "localhost" disconnected</span>
</div>
<div class="row" style="top:240px">
<span style="left:12.600000000000023px">10:59:40</span>
<span style="left:87.60000000000002px">112</span>
<span style="left:157.60000000000002px">3720</span>
<span style="left:216.60000000000002px;letter-spacing:0.16px">Info</span>
<span style="left:287.6px;letter-spacing:-0.43px">FSGateway</span>
<span style="left:387.6px;letter-spacing:-0.147px">OPC Group remove request for P.1 successful</span>
</div>
<div class="row" style="top:255px">
<span style="left:12.600000000000023px">10:59:40</span>
<span style="left:87.60000000000002px">112</span>
<span style="left:157.60000000000002px">3720</span>
<span style="left:216.60000000000002px;letter-spacing:0.16px">Info</span>
<span style="left:287.6px;letter-spacing:-0.43px">FSGateway</span>
<span style="left:387.6px;letter-spacing:-0.213px">OPC Group remove request for ZPV.P successful</span>
</div>
<div class="row" style="top:270px">
<span style="left:12.600000000000023px">10:59:43</span>
<span style="left:87.60000000000002px">2556</span>
<span style="left:157.60000000000002px">420</span>
<span style="left:216.60000000000002px;letter-spacing:-0.503px">DASProtFail</span>
<span style="left:287.6px;letter-spacing:-0.723px">DASMBSerial</span>
</div>
<div class="row" style="top:285px">
<span style="left:12.600000000000023px">10:59:43</span>
<span style="left:87.60000000000002px">2556</span>
<span style="left:157.60000000000002px">420</span>
<span style="left:216.60000000000002px;letter-spacing:-0.503px">DASProtFail</span>
<span style="left:287.6px;letter-spacing:-0.723px">DASMBSerial</span>
<span style="left:387.6px;letter-spacing:-0.119px">PLC poll message timed out on port COM3, revoking message &lt;00879d60&gt;(1) at 2013-02-12 10</span>
</div>
<div class="row" style="top:300px">
<span style="left:12.600000000000023px">10:59:46</span>
<span style="left:87.60000000000002px">2776</span>
<span style="left:157.60000000000002px">3612</span>
<span style="left:216.60000000000002px;letter-spacing:-0.238px">DACmnProt...</span>
<span style="left:287.6px;letter-spacing:-0.43px">FSGateway</span>
<span style="left:387.6px;letter-spacing:-0.282px">Valid license is available</span>
</div>
<div class="row" style="top:315px">
<span style="left:12.600000000000023px">10:59:46</span>
<span style="left:87.60000000000002px">2776</span>
<span style="left:157.60000000000002px">1104</span>
<span style="left:216.60000000000002px;letter-spacing:0.16px">Info</span>
<span style="left:287.6px;letter-spacing:-0.761px">PlugInDDESL</span>
<span style="left:387.6px;letter-spacing:0.041px">Timers: prot=50. validData=60000. Request=1000.</span>
</div>
<div class="row" style="top:330px">
<span style="left:12.600000000000023px">10:59:46</span>
<span style="left:87.60000000000002px">2776</span>
<span style="left:157.60000000000002px">1104</span>
<span style="left:216.60000000000002px;letter-spacing:0.16px">Info</span>
<span style="left:287.6px;letter-spacing:-0.43px">FSGateway</span>
<span style="left:387.6px;letter-spacing:-0.02px">Wonderware I/O Server Toolkit for Windows NT - Version 7,2,1,8</span>
</div>
<div class="row" style="top:345px">
<span style="left:12.600000000000023px">10:59:46</span>
<span style="left:87.60000000000002px">2776</span>
<span style="left:157.60000000000002px">1104</span>
<span style="left:216.60000000000002px;letter-spacing:0.16px">Info</span>
<span style="left:287.6px;letter-spacing:-1.066px">UNKNOWN</span>
<span style="left:387.6px;letter-spacing:-0.155px">Suitelink: OpenServer - Registered Server Name: (FSGateway )</span>
</div>
<div class="row" style="top:360px">
<span style="left:12.600000000000023px">10:59:51</span>
<span style="left:87.60000000000002px">656</span>
<span style="left:157.60000000000002px">2772</span>
<span style="left:216.60000000000002px;letter-spacing:0.16px">Info</span>
<span style="left:287.6px;letter-spacing:-0.904px">INTSPT</span>
<span style="left:387.6px;letter-spacing:-0.181px">Node "localhost" connected</span>
</div>
<div class="row" style="top:375px">
<span style="left:12.600000000000023px">10:59:51</span>
<span style="left:87.60000000000002px">656</span>
<span style="left:157.60000000000002px">2772</span>
<span style="left:216.60000000000002px;letter-spacing:0.16px">Info</span>
<span style="left:287.6px;letter-spacing:-0.904px">INTSPT</span>
<span style="left:387.6px;letter-spacing:-0.181px">Node "localhost" connected</span>
</div>
<div class="row Y" style="top:390px">
<span style="left:12.600000000000023px">10:59:52</span>
<span style="left:87.60000000000002px">2776</span>
<span style="left:157.60000000000002px">960</span>
<span style="left:216.60000000000002px;letter-spacing:-0.166px">Warning</span>
<span style="left:287.6px;letter-spacing:-0.43px">FSGateway</span>
<span style="left:387.6px;letter-spacing:-0.057px">Failed to activate remote server for 'ZPV' hr=8000401a</span>
</div>
<div class="row Y" style="top:405px">
<span style="left:12.600000000000023px">10:59:52</span>
<span style="left:87.60000000000002px">2776</span>
<span style="left:157.60000000000002px">960</span>
<span style="left:216.60000000000002px;letter-spacing:-0.166px">Warning</span>
<span style="left:287.6px;letter-spacing:-0.43px">FSGateway</span>
<span style="left:387.6px;letter-spacing:-0.025px">Connection lost or reconnect attempt failed.  Retrying attempt 1 of 3 in 30000 ms</span>
</div>
<div class="row Y" style="top:420px">
<span style="left:12.600000000000023px">10:59:52</span>
<span style="left:87.60000000000002px">2776</span>
<span style="left:157.60000000000002px">2112</span>
<span style="left:216.60000000000002px;letter-spacing:-0.166px">Warning</span>
<span style="left:287.6px;letter-spacing:-0.43px">FSGateway</span>
<span style="left:387.6px;letter-spacing:-0.072px">Failed to activate OPC Server locally, hr=8000401a</span>
</div>
<div class="row Y" style="top:435px">
<span style="left:12.600000000000023px">10:59:52</span>
<span style="left:87.60000000000002px">2776</span>
<span style="left:157.60000000000002px">2112</span>
<span style="left:216.60000000000002px;letter-spacing:-0.166px">Warning</span>
<span style="left:287.6px;letter-spacing:-0.43px">FSGateway</span>
<span style="left:387.6px;letter-spacing:-0.025px">Connection lost or reconnect attempt failed.  Retrying attempt 1 of 3 in 30000 ms</span>
</div>
<div class="row" style="top:450px">
<span style="left:12.600000000000023px">10:59:53</span>
<span style="left:87.60000000000002px">2556</span>
<span style="left:157.60000000000002px">420</span>
<span style="left:216.60000000000002px;letter-spacing:-0.503px">DASProtFail</span>
<span style="left:287.6px;letter-spacing:-0.723px">DASMBSerial</span>
</div>
<div class="row" style="top:465px">
<span style="left:12.600000000000023px">10:59:53</span>
<span style="left:87.60000000000002px">2556</span>
<span style="left:157.60000000000002px">420</span>
<span style="left:216.60000000000002px;letter-spacing:-0.503px">DASProtFail</span>
<span style="left:287.6px;letter-spacing:-0.723px">DASMBSerial</span>
<span style="left:387.6px;letter-spacing:-0.119px">PLC poll message timed out on port COM3, revoking message &lt;00879d60&gt;(1) at 2013-02-12 10</span>
</div>
<div class="row" style="top:480px">
<span style="left:12.600000000000023px">11:00:03</span>
<span style="left:87.60000000000002px">2556</span>
<span style="left:157.60000000000002px">420</span>
<span style="left:216.60000000000002px;letter-spacing:-0.503px">DASProtFail</span>
<span style="left:287.6px;letter-spacing:-0.723px">DASMBSerial</span>
</div>
<div class="row" style="top:495px">
<span style="left:12.600000000000023px">11:00:03</span>
<span style="left:87.60000000000002px">2556</span>
<span style="left:157.60000000000002px">420</span>
<span style="left:216.60000000000002px;letter-spacing:-0.503px">DASProtFail</span>
<span style="left:287.6px;letter-spacing:-0.723px">DASMBSerial</span>
<span style="left:387.6px;letter-spacing:-0.119px">PLC poll message timed out on port COM3, revoking message &lt;00879d60&gt;(1) at 2013-02-12 11</span>
</div>
<div class="row" style="top:510px">
<span style="left:12.600000000000023px">11:00:13</span>
<span style="left:87.60000000000002px">2556</span>
<span style="left:157.60000000000002px">420</span>
<span style="left:216.60000000000002px;letter-spacing:-0.503px">DASProtFail</span>
<span style="left:287.6px;letter-spacing:-0.723px">DASMBSerial</span>
</div>
<div class="row" style="top:525px">
<span style="left:12.600000000000023px">11:00:13</span>
<span style="left:87.60000000000002px">2556</span>
<span style="left:157.60000000000002px">420</span>
<span style="left:216.60000000000002px;letter-spacing:-0.503px">DASProtFail</span>
<span style="left:287.6px;letter-spacing:-0.723px">DASMBSerial</span>
<span style="left:387.6px;letter-spacing:-0.119px">PLC poll message timed out on port COM3, revoking message &lt;00879d60&gt;(1) at 2013-02-12 11</span>
</div>
<div class="row" style="top:540px">
<span style="left:12.600000000000023px">11:00:20</span>
<span style="left:87.60000000000002px">2556</span>
<span style="left:157.60000000000002px">3528</span>
<span style="left:216.60000000000002px;letter-spacing:-0.503px">DASProtFail</span>
<span style="left:287.6px;letter-spacing:-0.723px">DASMBSerial</span>
<span style="left:387.6px;letter-spacing:-0.063px">Message &lt;0087d110&gt; : Failed to verify Modbus RTU frame. Received packet - fb 2 3 48 0 78 0</span>
</div>
<div class="row Y" style="top:555px">
<span style="left:12.600000000000023px">11:00:22</span>
<span style="left:87.60000000000002px">2776</span>
<span style="left:157.60000000000002px">960</span>
<span style="left:216.60000000000002px;letter-spacing:-0.166px">Warning</span>
<span style="left:287.6px;letter-spacing:-0.43px">FSGateway</span>
<span style="left:387.6px;letter-spacing:-0.057px">Failed to activate remote server for 'ZPV' hr=8000401a</span>
</div>
<div class="row Y" style="top:570px">
<span style="left:12.600000000000023px">11:00:22</span>
<span style="left:87.60000000000002px">2776</span>
<span style="left:157.60000000000002px">960</span>
<span style="left:216.60000000000002px;letter-spacing:-0.166px">Warning</span>
<span style="left:287.6px;letter-spacing:-0.43px">FSGateway</span>
<span style="left:387.6px;letter-spacing:-0.025px">Connection lost or reconnect attempt failed.  Retrying attempt 2 of 3 in 30000 ms</span>
</div>
<div class="row Y" style="top:585px">
<span style="left:12.600000000000023px">11:00:22</span>
<span style="left:87.60000000000002px">2776</span>
<span style="left:157.60000000000002px">2112</span>
<span style="left:216.60000000000002px;letter-spacing:-0.166px">Warning</span>
<span style="left:287.6px;letter-spacing:-0.43px">FSGateway</span>
<span style="left:387.6px;letter-spacing:-0.072px">Failed to activate OPC Server locally, hr=8000401a</span>
</div>
<div class="row Y" style="top:600px">
<span style="left:12.600000000000023px">11:00:22</span>
<span style="left:87.60000000000002px">2776</span>
<span style="left:157.60000000000002px">2112</span>
<span style="left:216.60000000000002px;letter-spacing:-0.166px">Warning</span>
<span style="left:287.6px;letter-spacing:-0.43px">FSGateway</span>
<span style="left:387.6px;letter-spacing:-0.025px">Connection lost or reconnect attempt failed.  Retrying attempt 2 of 3 in 30000 ms</span>
</div>
<div class="row" style="top:615px">
<span style="left:12.600000000000023px">11:00:23</span>
<span style="left:87.60000000000002px">2556</span>
<span style="left:157.60000000000002px">420</span>
<span style="left:216.60000000000002px;letter-spacing:-0.503px">DASProtFail</span>
<span style="left:287.6px;letter-spacing:-0.723px">DASMBSerial</span>
</div>
<div class="row" style="top:630px">
<span style="left:12.600000000000023px">11:00:23</span>
<span style="left:87.60000000000002px">2556</span>
<span style="left:157.60000000000002px">420</span>
<span style="left:216.60000000000002px;letter-spacing:-0.503px">DASProtFail</span>
<span style="left:287.6px;letter-spacing:-0.723px">DASMBSerial</span>
<span style="left:387.6px;letter-spacing:-0.119px">PLC poll message timed out on port COM3, revoking message &lt;00879d60&gt;(1) at 2013-02-12 11</span>
</div>
<div class="row" style="top:645px">
<span style="left:12.600000000000023px">11:00:24</span>
<span style="left:87.60000000000002px">2556</span>
<span style="left:157.60000000000002px">3528</span>
<span style="left:216.60000000000002px;letter-spacing:-0.503px">DASProtFail</span>
<span style="left:287.6px;letter-spacing:-0.723px">DASMBSerial</span>
<span style="left:387.6px;letter-spacing:-0.064px">Message &lt;0087cd80&gt; : Failed to verify Modbus RTU frame. Received packet - ff 1 3 48 5 7b 3 3</span>
</div>
<div class="row" style="top:660px">
<span style="left:12.600000000000023px">11:00:33</span>
<span style="left:87.60000000000002px">2556</span>
<span style="left:157.60000000000002px">420</span>
<span style="left:216.60000000000002px;letter-spacing:-0.503px">DASProtFail</span>
<span style="left:287.6px;letter-spacing:-0.723px">DASMBSerial</span>
</div>
<div class="row" style="top:675px">
<span style="left:12.600000000000023px">11:00:33</span>
<span style="left:87.60000000000002px">2556</span>
<span style="left:157.60000000000002px">420</span>
<span style="left:216.60000000000002px;letter-spacing:-0.503px">DASProtFail</span>
<span style="left:287.6px;letter-spacing:-0.723px">DASMBSerial</span>
<span style="left:387.6px;letter-spacing:-0.119px">PLC poll message timed out on port COM3, revoking message &lt;00879d60&gt;(1) at 2013-02-12 11</span>
</div>
<div class="row" style="top:690px">
<span style="left:12.600000000000023px">11:00:35</span>
<span style="left:87.60000000000002px">656</span>
<span style="left:157.60000000000002px">2772</span>
<span style="left:216.60000000000002px;letter-spacing:0.16px">Info</span>
<span style="left:287.6px;letter-spacing:-0.904px">INTSPT</span>
<span style="left:387.6px;letter-spacing:-0.189px">Node "localhost" disconnected</span>
</div>
<div class="row" style="top:705px">
<span style="left:12.600000000000023px">11:00:35</span>
<span style="left:87.60000000000002px">656</span>
<span style="left:157.60000000000002px">2772</span>
<span style="left:216.60000000000002px;letter-spacing:0.16px">Info</span>
<span style="left:287.6px;letter-spacing:-0.904px">INTSPT</span>
<span style="left:387.6px;letter-spacing:-0.189px">Node "localhost" disconnected</span>
</div>
<div class="row" style="top:720px">
<span style="left:12.600000000000023px">11:00:35</span>
<span style="left:87.60000000000002px">656</span>
<span style="left:157.60000000000002px">2772</span>
<span style="left:216.60000000000002px;letter-spacing:0.16px">Info</span>
<span style="left:287.6px;letter-spacing:-0.904px">INTSPT</span>
<span style="left:387.6px;letter-spacing:-0.189px">Node "localhost" disconnected</span>
</div>
<div class="row" style="top:735px">
<span style="left:12.600000000000023px">11:00:44</span>
<span style="left:87.60000000000002px">656</span>
<span style="left:157.60000000000002px">2772</span>
<span style="left:216.60000000000002px;letter-spacing:0.16px">Info</span>
<span style="left:287.6px;letter-spacing:-0.904px">INTSPT</span>
<span style="left:387.6px;letter-spacing:-0.189px">Node "localhost" disconnected</span>
</div>
<div class="row" style="top:750px">
<span style="left:12.600000000000023px">11:00:44</span>
<span style="left:87.60000000000002px">656</span>
<span style="left:157.60000000000002px">2772</span>
<span style="left:216.60000000000002px;letter-spacing:0.16px">Info</span>
<span style="left:287.6px;letter-spacing:-0.904px">INTSPT</span>
<span style="left:387.6px;letter-spacing:-0.189px">Node "localhost" disconnected</span>
</div>
<div class="row" style="top:765px">
<span style="left:12.600000000000023px">11:00:45</span>
<span style="left:87.60000000000002px">2776</span>
<span style="left:157.60000000000002px">652</span>
<span style="left:216.60000000000002px;letter-spacing:0.16px">Info</span>
<span style="left:287.6px;letter-spacing:-0.43px">FSGateway</span>
<span style="left:387.6px;letter-spacing:-0.147px">OPC Group remove request for P.1 successful</span>
</div>
<div class="row" style="top:780px">
<span style="left:12.600000000000023px">11:00:45</span>
<span style="left:87.60000000000002px">2776</span>
<span style="left:157.60000000000002px">652</span>
<span style="left:216.60000000000002px;letter-spacing:0.16px">Info</span>
<span style="left:287.6px;letter-spacing:-0.43px">FSGateway</span>
<span style="left:387.6px;letter-spacing:-0.213px">OPC Group remove request for ZPV.P successful</span>
</div>
<div class="row" style="top:795px">
<span style="left:12.600000000000023px">11:00:51</span>
<span style="left:87.60000000000002px">2844</span>
<span style="left:157.60000000000002px">780</span>
<span style="left:216.60000000000002px;letter-spacing:-0.238px">DACmnProt...</span>
<span style="left:287.6px;letter-spacing:-0.43px">FSGateway</span>
<span style="left:387.6px;letter-spacing:-0.282px">Valid license is available</span>
</div>
<div class="row" style="top:810px">
<span style="left:12.600000000000023px">11:00:51</span>
<span style="left:87.60000000000002px">2844</span>
<span style="left:157.60000000000002px">2076</span>
<span style="left:216.60000000000002px;letter-spacing:0.16px">Info</span>
<span style="left:287.6px;letter-spacing:-0.761px">PlugInDDESL</span>
<span style="left:387.6px;letter-spacing:0.041px">Timers: prot=50. validData=60000. Request=1000.</span>
</div>
<div class="row" style="top:825px">
<span style="left:12.600000000000023px">11:00:51</span>
<span style="left:87.60000000000002px">2844</span>
<span style="left:157.60000000000002px">2076</span>
<span style="left:216.60000000000002px;letter-spacing:0.16px">Info</span>
<span style="left:287.6px;letter-spacing:-0.43px">FSGateway</span>
<span style="left:387.6px;letter-spacing:-0.02px">Wonderware I/O Server Toolkit for Windows NT - Version 7,2,1,8</span>
</div>
<div class="row" style="top:840px">
<span style="left:12.600000000000023px">11:00:51</span>
<span style="left:87.60000000000002px">2844</span>
<span style="left:157.60000000000002px">2076</span>
<span style="left:216.60000000000002px;letter-spacing:0.16px">Info</span>
<span style="left:287.6px;letter-spacing:-1.066px">UNKNOWN</span>
<span style="left:387.6px;letter-spacing:-0.155px">Suitelink: OpenServer - Registered Server Name: (FSGateway )</span>
</div>
<div class="row" style="top:855px">
<span style="left:12.600000000000023px">11:00:51</span>
<span style="left:87.60000000000002px">656</span>
<span style="left:157.60000000000002px">2772</span>
<span style="left:216.60000000000002px;letter-spacing:0.16px">Info</span>
<span style="left:287.6px;letter-spacing:-0.904px">INTSPT</span>
<span style="left:387.6px;letter-spacing:-0.181px">Node "localhost" connected</span>
</div>
<div class="row" style="top:870px">
<span style="left:12.600000000000023px">11:00:52</span>
<span style="left:87.60000000000002px">656</span>
<span style="left:157.60000000000002px">2772</span>
<span style="left:216.60000000000002px;letter-spacing:0.16px">Info</span>
<span style="left:287.6px;letter-spacing:-0.904px">INTSPT</span>
<span style="left:387.6px;letter-spacing:-0.181px">Node "localhost" connected</span>
</div>
<div class="row Y" style="top:885px">
<span style="left:12.600000000000023px">11:00:52</span>
<span style="left:87.60000000000002px">2844</span>
<span style="left:157.60000000000002px">1868</span>
<span style="left:216.60000000000002px;letter-spacing:-0.166px">Warning</span>
<span style="left:287.6px;letter-spacing:-0.43px">FSGateway</span>
<span style="left:387.6px;letter-spacing:-0.057px">Failed to activate remote server for 'ZPV' hr=8000401a</span>
</div>
<div class="row Y" style="top:900px">
<span style="left:12.600000000000023px">11:00:52</span>
<span style="left:87.60000000000002px">2844</span>
<span style="left:157.60000000000002px">1868</span>
<span style="left:216.60000000000002px;letter-spacing:-0.166px">Warning</span>
<span style="left:287.6px;letter-spacing:-0.43px">FSGateway</span>
<span style="left:387.6px;letter-spacing:-0.025px">Connection lost or reconnect attempt failed.  Retrying attempt 1 of 3 in 30000 ms</span>
</div>
<div class="row Y" style="top:915px">
<span style="left:12.600000000000023px">11:00:52</span>
<span style="left:87.60000000000002px">2844</span>
<span style="left:157.60000000000002px">2856</span>
<span style="left:216.60000000000002px;letter-spacing:-0.166px">Warning</span>
<span style="left:287.6px;letter-spacing:-0.43px">FSGateway</span>
<span style="left:387.6px;letter-spacing:-0.072px">Failed to activate OPC Server locally, hr=8000401a</span>
</div>
<div class="row S" style="top:930px">
<span style="left:12.600000000000023px">11:00:52</span>
<span style="left:87.60000000000002px">2844</span>
<span style="left:157.60000000000002px">2856</span>
<span style="left:216.60000000000002px;letter-spacing:-0.166px">Warning</span>
<span style="left:287.6px;letter-spacing:-0.43px">FSGateway</span>
<span style="left:387.6px;letter-spacing:-0.025px">Connection lost or reconnect attempt failed.  Retrying attempt 1 of 3 in 30000 ms</span>
<div class="a" style="left:0;top:0;width:847px;height:15px;border:1px dotted #f0a030"></div>
</div>
<div class="trk" style="left:1259px;top:122px;width:17px;height:824px"></div>
<div class="btn" style="left:1259px;top:105px;width:17px;height:17px"><i></i></div>
<svg style="left:1264px;top:111px" width="7" height="4"><path d="M3.5 0 L7 4 L0 4Z" fill="#000"/></svg>
<div class="btn" style="left:1259px;top:921px;width:17px;height:8px"><i></i></div>
<div class="btn" style="left:1259px;top:929px;width:17px;height:17px"><i></i></div>
<svg style="left:1264px;top:936px" width="7" height="4"><path d="M0 0 L7 0 L3.5 4Z" fill="#000"/></svg>
<div class="trk" style="left:429px;top:946px;width:813px;height:17px"></div>
<div class="btn" style="left:412px;top:946px;width:17px;height:17px"><i></i></div>
<svg style="left:417px;top:951px" width="4" height="7"><path d="M4 0 L4 7 L0 3.5Z" fill="#000"/></svg>
<div class="btn" style="left:519px;top:946px;width:691px;height:17px"><i></i></div>
<div class="btn" style="left:1242px;top:946px;width:17px;height:17px"><i></i></div>
<svg style="left:1249px;top:951px" width="4" height="7"><path d="M0 0 L4 3.5 L0 7Z" fill="#000"/></svg>
<div class="a" style="left:1259px;top:946px;width:17px;height:17px;background:#ece9d8"></div>
<div id="status" class="a"></div>
<div class="t" style="left:2px;top:974px">Refreshing</div>
<div class="a" style="left:1064px;top:971px;width:127px;height:17px;border:1px solid #686868;border-radius:3px;background:#fff;box-shadow:inset 1px 1px 0 #bebebe"></div>
<div class="a" style="left:1068px;top:974px;width:6px;height:11px;background:linear-gradient(#a8eea8 0,#3cd83c 5px,#22cc22 6px,#8ae88a 11px)"></div>
<div class="a" style="left:1076px;top:974px;width:6px;height:11px;background:linear-gradient(#a8eea8 0,#3cd83c 5px,#22cc22 6px,#8ae88a 11px)"></div>
<div class="a" style="left:1084px;top:974px;width:6px;height:11px;background:linear-gradient(#a8eea8 0,#3cd83c 5px,#22cc22 6px,#8ae88a 11px)"></div>
<div class="a" style="left:1058px;top:971px;width:1px;height:17px;background:#c8c4b0"></div><div class="a" style="left:1059px;top:971px;width:1px;height:17px;background:#fff"></div>
<div class="a" style="left:1191px;top:971px;width:1px;height:17px;background:#c8c4b0"></div><div class="a" style="left:1192px;top:971px;width:1px;height:17px;background:#fff"></div>
<div class="a" style="left:1276px;top:971px;width:1px;height:17px;background:#c8c4b0"></div><div class="a" style="left:1277px;top:971px;width:1px;height:17px;background:#fff"></div>
<div id="taskbar" class="a"></div>
<div class="a" style="left:0;top:994px;width:96px;height:30px;border-radius:0 12px 12px 0/0 15px 15px 0;background:linear-gradient(#5cae5c 0,#44a544 2px,#3c9a3c 6px,#379337 14px,#3a973a 22px,#2d7d2d 30px);box-shadow:inset -2px 0 2px #1e6a1e, inset 0 1px 0 #7cc47c"></div>
<svg style="left:10px;top:1000px" width="19" height="17" viewBox="0 0 19 17" shape-rendering="crispEdges"><path d="M1.5 2 Q4.5 0.5 8.5 1.5 L7.5 7.5 Q4 6.5 0.8 8Z" fill="#f25a1e" shape-rendering="auto"/><path d="M9.8 1.8 Q13.5 3 18 1.5 L17 8 Q13 9 8.8 7.8Z" fill="#6cc82c" shape-rendering="auto"/><path d="M0.6 9.2 Q4 7.8 7.3 8.8 L6.3 15 Q3.5 14 0 15Z" fill="#3c8cf0" shape-rendering="auto"/><path d="M8.6 9.1 Q13 10.3 16.8 9.3 L15.8 16 Q12 17 7.6 15.3Z" fill="#fcc81c" shape-rendering="auto"/></svg>
<div class="t" style="left:35px;top:999px;font-size:18px;line-height:20px;font-weight:bold;font-style:italic;color:#fff;letter-spacing:-1.2px;text-shadow:1px 1px 1px #1c501c">пуск</div>
<div class="a" style="left:105px;top:1001px;width:2px;height:2px;background:#18399e;box-shadow:1px 1px 0 #6aa0f8"></div>
<div class="a" style="left:105px;top:1005px;width:2px;height:2px;background:#18399e;box-shadow:1px 1px 0 #6aa0f8"></div>
<div class="a" style="left:105px;top:1009px;width:2px;height:2px;background:#18399e;box-shadow:1px 1px 0 #6aa0f8"></div>
<div class="a" style="left:105px;top:1013px;width:2px;height:2px;background:#18399e;box-shadow:1px 1px 0 #6aa0f8"></div>
<div class="a" style="left:105px;top:1017px;width:2px;height:2px;background:#18399e;box-shadow:1px 1px 0 #6aa0f8"></div>
<div class="a" style="left:1138px;top:1001px;width:2px;height:2px;background:#18399e;box-shadow:1px 1px 0 #6aa0f8"></div>
<div class="a" style="left:1138px;top:1005px;width:2px;height:2px;background:#18399e;box-shadow:1px 1px 0 #6aa0f8"></div>
<div class="a" style="left:1138px;top:1009px;width:2px;height:2px;background:#18399e;box-shadow:1px 1px 0 #6aa0f8"></div>
<div class="a" style="left:1138px;top:1013px;width:2px;height:2px;background:#18399e;box-shadow:1px 1px 0 #6aa0f8"></div>
<div class="a" style="left:1138px;top:1017px;width:2px;height:2px;background:#18399e;box-shadow:1px 1px 0 #6aa0f8"></div>
<div class="task" style="left:116px"><span style="left:29px;top:5px">Total Commander 7.5...</span></div>
<svg style="left:125px;top:1002px" width="16" height="16" viewBox="0 0 16 16" shape-rendering="crispEdges"><circle cx="8" cy="8" r="7" fill="#6cc070" stroke="#2a6a4a" shape-rendering="auto"/><circle cx="8" cy="6" r="4" fill="#c8f0d0" opacity="0.7" shape-rendering="auto"/><text x="2.5" y="12" font-size="9" font-weight="bold" font-family="Liberation Sans" fill="#147014">Tc</text></svg>
<div class="task" style="left:276px"><span style="left:29px;top:5px">[Demo] Advantech A...</span></div>
<svg style="left:285px;top:1002px" width="16" height="16" viewBox="0 0 16 16" shape-rendering="crispEdges"><rect x="1" y="0" width="14" height="5" fill="#e8e030"/><text x="2" y="4.5" font-size="5" font-weight="bold" font-family="Liberation Sans" fill="#303090">OPC</text><rect x="7" y="5" width="1" height="4" fill="#888"/><rect x="1" y="10" width="6" height="6" fill="#30a0a0"/><rect x="9" y="10" width="6" height="6" fill="#40b8d0"/></svg>
<div class="task" style="left:436px"><span style="left:29px;top:5px">InTouch - WindowMa...</span></div>
<svg style="left:445px;top:1002px" width="16" height="16" viewBox="0 0 16 16" shape-rendering="crispEdges"><path d="M1 3 L8 1 L15 3 L12 14 L8 15 L4 14Z" fill="#40c8d8" stroke="#106878" shape-rendering="auto"/><path d="M4 5 L8 11 L12 5" stroke="#fff" stroke-width="2" fill="none" shape-rendering="auto"/></svg>
<div class="task" style="left:596px"><span style="left:29px;top:5px">LinkMaster - [C:\Docu...</span></div>
<svg style="left:605px;top:1002px" width="16" height="16" viewBox="0 0 16 16" shape-rendering="crispEdges"><rect x="3" y="1" width="10" height="13" fill="#e8d890" stroke="#605020"/><rect x="0" y="5" width="6" height="3" fill="#5060a0"/><rect x="10" y="8" width="6" height="3" fill="#5060a0"/><rect x="4" y="3" width="8" height="1" fill="#605020"/><rect x="4" y="11" width="8" height="1" fill="#605020"/></svg>
<div class="task" style="left:756px"><span style="left:29px;top:5px">InTouch - WindowVie...</span></div>
<svg style="left:765px;top:1002px" width="16" height="16" viewBox="0 0 16 16" shape-rendering="crispEdges"><path d="M1 3 L8 1 L15 3 L12 14 L8 15 L4 14Z" fill="#40c8d8" stroke="#106878" shape-rendering="auto"/><path d="M4 5 L8 11 L12 5" stroke="#fff" stroke-width="2" fill="none" shape-rendering="auto"/></svg>
<div class="task act" style="left:916px"><span style="left:30px;top:6px">SMC - [ArchestrA Sys...</span></div>
<svg style="left:927px;top:1003px" width="16" height="16" viewBox="0 0 16 16" shape-rendering="crispEdges"><defs><clipPath id="ac3"><path d="M5 1 H11 L15.5 5.5 V11 L11 15.8 H5 L1 11.5 V5Z"/></clipPath><linearGradient id="ag3" x1="0" y1="0" x2="1" y2="1"><stop offset="0" stop-color="#40a8ff"/><stop offset="0.6" stop-color="#1a6ae8"/><stop offset="1" stop-color="#2040a0"/></linearGradient></defs><g clip-path="url(#ac3)" shape-rendering="auto"><rect x="0" y="0" width="17" height="17" fill="url(#ag3)"/><path d="M0 0 H13 L1 13Z" fill="#b8f4ff"/><path d="M0 8 L8 0 H3 L0 3Z" fill="#e8ffff"/><path d="M1 14.5 C4 9 8 4 13.5 1.5" stroke="#e8109a" stroke-width="3" fill="none"/><path d="M4.5 16 C7 11 10.5 6.5 16 3.5" stroke="#ffb020" stroke-width="2.2" fill="none"/><path d="M0 12 L4 16 H0Z" fill="#a00060"/><path d="M3.5 16 L6 12 L8 16Z" fill="#ff6010"/></g></svg>
<div id="tray" class="a"></div>
<div class="a" style="left:1152px;top:1001px;width:16px;height:16px;background:#2c64d8"></div>
<div class="t" style="left:1153px;top:1003px;color:#fff">EN</div>
<div class="a" style="left:1178px;top:1000px;width:19px;height:19px;border-radius:50%;background:radial-gradient(circle at 40% 30%,#8ac8ff 0,#3a8ef0 55%,#1a5cc8 100%);border:1px solid #e0f0ff"></div>
<svg style="left:1183px;top:1004px" width="9" height="11" viewBox="0 0 9 11" shape-rendering="crispEdges"><path d="M6 1.5 L2.5 5.5 L6 9.5" stroke="#fff" stroke-width="2" fill="none" shape-rendering="auto"/></svg>
<svg style="left:1199px;top:1000px" width="16" height="16" viewBox="0 0 16 16" shape-rendering="crispEdges"><rect x="5.5" y="0.5" width="9" height="7" fill="#b8e0ff" stroke="#4070a0"/><rect x="0.5" y="5.5" width="9" height="7" fill="#b8e0ff" stroke="#4070a0"/><rect x="2" y="13" width="7" height="2" fill="#d0d8e0"/><rect x="9" y="8" width="5" height="2" fill="#d0d8e0"/></svg>
<svg style="left:1216px;top:1000px" width="16" height="16" viewBox="0 0 16 16" shape-rendering="crispEdges"><path d="M7.5 0.5 L14 3 V8 Q14 13 7.5 15.5 Q1 13 1 8 V3Z" fill="#d81818" stroke="#c0c0c0" shape-rendering="auto"/><path d="M5 5 L10 10 M10 5 L5 10" stroke="#fff" stroke-width="1.6" shape-rendering="auto"/></svg>
<div class="t" style="left:1239px;top:1003px;color:#fff">11:03</div>
</body></html>
